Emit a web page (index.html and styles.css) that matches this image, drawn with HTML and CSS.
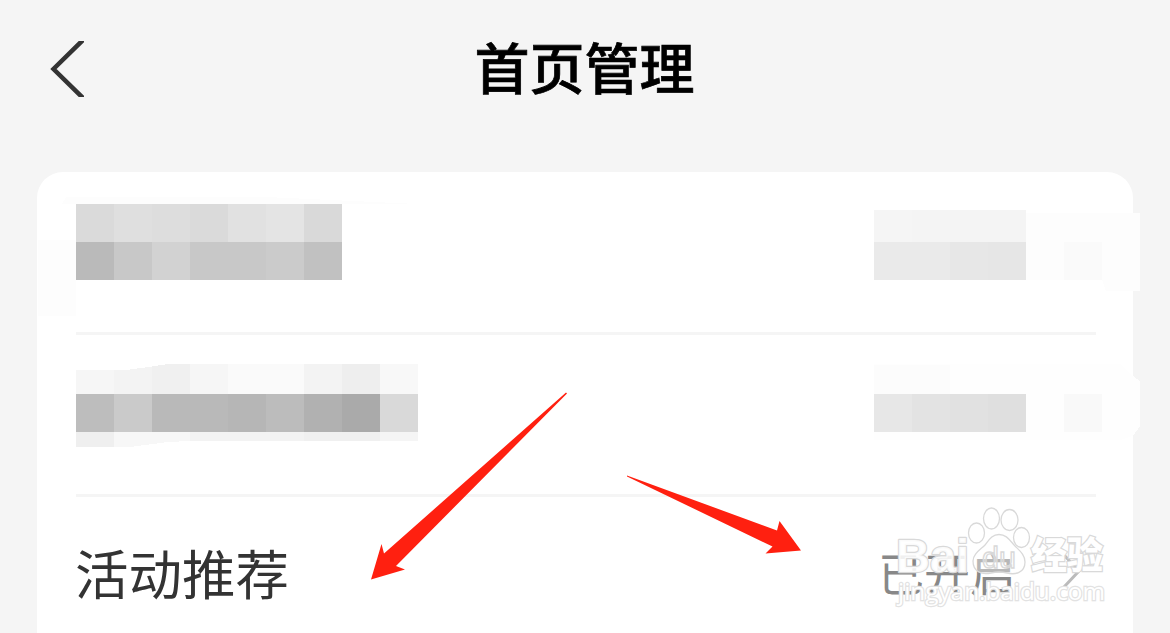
FILE: index.html
```
<!DOCTYPE html>
<html lang="zh-CN">

<head>
    <meta charset="UTF-8">
    <meta name="viewport" content="width=device-width, initial-scale=1.0">
    <title>首页管理</title>
    <link rel="stylesheet" href="styles.css">
</head>

<body>
    <header class="navbar">
        <svg class="back" width="40" height="56" viewBox="0 0 40 56">
            <path d="M42 -4 L9.5 28 L42 60" />
        </svg>
        <h1>首页管理</h1>
    </header>

    <main class="card">
        <div class="row row-first">
            <svg class="mosaic" width="342" height="76" viewBox="0 0 342 76">
                <path fill="#fdfdfd" d="M-38 36 H0 V112 H-38 Z M-10 -7 H190 L342 0 H-14 Z" />
                <rect fill="#dadada" x="0" y="0" width="38" height="38" />
                <rect fill="#dfdfdf" x="38" y="0" width="38" height="38" />
                <rect fill="#dddddd" x="76" y="0" width="38" height="38" />
                <rect fill="#dadada" x="114" y="0" width="38" height="38" />
                <rect fill="#e1e1e1" x="152" y="0" width="38" height="38" />
                <rect fill="#e4e4e4" x="190" y="0" width="38" height="38" />
                <rect fill="#d9d9d9" x="228" y="0" width="38" height="38" />
                <rect fill="#bababa" x="0" y="38" width="38" height="38" />
                <rect fill="#c8c8c8" x="38" y="38" width="38" height="38" />
                <rect fill="#d2d2d2" x="76" y="38" width="38" height="38" />
                <rect fill="#c8c8c8" x="114" y="38" width="76" height="38" />
                <rect fill="#cbcbcb" x="190" y="38" width="38" height="38" />
                <rect fill="#c1c1c1" x="228" y="38" width="38" height="38" />
            </svg>
            <svg class="mosaic" width="222" height="76" viewBox="0 0 222 76">
                <path fill="#fdfdfd" d="M152 9 H266 V87 H232 L228 76 H152 Z" />
                <rect fill="#f5f5f5" x="0" y="6" width="38" height="32" />
                <rect fill="#f4f4f4" x="38" y="6" width="114" height="32" />
                <rect fill="#eaeaea" x="0" y="38" width="76" height="38" />
                <rect fill="#e7e7e7" x="76" y="38" width="38" height="38" />
                <rect fill="#e6e6e6" x="114" y="38" width="38" height="38" />
                <rect fill="#fafafa" x="190" y="38" width="38" height="38" />
            </svg>
        </div>

        <div class="row row-second">
            <svg class="mosaic" width="342" height="83" viewBox="0 0 342 83">
                <path fill="#f6f6f6" d="M0 6 H38 V30 H0 Z" />
                <path fill="#f3f3f3" d="M38 6 L54 5.5 L76 2.5 V30 H38 Z" />
                <path fill="#f0f0f0" d="M76 2.5 L92 0 H114 V30 H76 Z" />
                <rect fill="#f6f6f6" x="114" y="0" width="38" height="30" />
                <rect fill="#fafafa" x="152" y="0" width="76" height="30" />
                <rect fill="#f3f3f3" x="228" y="0" width="38" height="30" />
                <rect fill="#eeeeee" x="266" y="0" width="38" height="30" />
                <rect fill="#f8f8f8" x="304" y="0" width="38" height="30" />
                <rect fill="#bdbdbd" x="0" y="30" width="38" height="38" />
                <rect fill="#cacaca" x="38" y="30" width="38" height="38" />
                <rect fill="#b9b9b9" x="76" y="30" width="76" height="38" />
                <rect fill="#b6b6b6" x="152" y="30" width="38" height="38" />
                <rect fill="#bcbcbc" x="190" y="30" width="38" height="38" />
                <rect fill="#b1b1b1" x="228" y="30" width="38" height="38" />
                <rect fill="#aaaaaa" x="266" y="30" width="38" height="38" />
                <rect fill="#d9d9d9" x="304" y="30" width="38" height="38" />
                <rect fill="#efefef" x="0" y="68" width="38" height="15" />
                <path fill="#f7f7f7" d="M38 68 H114 V77 L92 78 L54 83 H38 Z" />
                <rect fill="#f3f3f3" x="114" y="68" width="114" height="9" />
                <rect fill="#f0f0f0" x="228" y="68" width="76" height="9" />
                <rect fill="#f5f5f5" x="304" y="68" width="38" height="9" />
            </svg>
            <svg class="mosaic" width="222" height="83" viewBox="0 0 222 83">
                <path fill="#fefefe" d="M0 0 H246 L259 12 L266 17 V62 L259 72 L246 76 H0 Z" />
                <rect fill="#fcfcfc" x="0" y="1" width="76" height="29" />
                <rect fill="#e7e7e7" x="0" y="30" width="38" height="38" />
                <rect fill="#e3e3e3" x="38" y="30" width="38" height="38" />
                <rect fill="#e1e1e1" x="76" y="30" width="38" height="38" />
                <rect fill="#dfdfdf" x="114" y="30" width="38" height="38" />
                <rect fill="#f9f9f9" x="190" y="30" width="38" height="38" />
            </svg>
        </div>

        <div class="row row-third">
            <span class="label">活动推荐</span>
            <span class="value">
                已开启
                <svg class="chevron" width="20" height="40" viewBox="0 0 20 40">
                    <path d="M2 4 L17 20 L2 36" />
                </svg>
            </span>
        </div>
    </main>

    <!-- red pointers over the list -->
    <svg class="arrows" width="1170" height="633" viewBox="0 0 1170 633">
        <path d="M566 392.5 L567 393.5 L396 566 L405 569.5 L371 579.5 L381.5 544 L384 553.5 Z" />
        <path d="M627 475.5 L777 530.5 L779.5 521 L801 550.5 L765.5 553.5 L772.5 546.5 L627 476.5 Z" />
    </svg>

    <svg class="watermark" width="230" height="110" viewBox="890 500 230 110">
        <g class="mark">
            <text class="latin" x="896" y="572" textLength="73" lengthAdjust="spacingAndGlyphs">Bai</text>
            <ellipse cx="976.5" cy="533" rx="8" ry="10" />
            <ellipse cx="991.5" cy="518.5" rx="8" ry="10.5" />
            <ellipse cx="1009.5" cy="520" rx="8.5" ry="10.5" />
            <ellipse cx="1021.5" cy="537.5" rx="8" ry="10" />
            <path d="M999 534.5 C1007 534.5 1010 541 1015 546 C1020 551 1025 555 1025 562 C1025 573 1015 575 1007 573 C1001 571.5 997 571.5 991 573 C982 575 973 572 973 561 C973 554 980 550 985 545 C989 540 992 534.5 999 534.5 Z" />
            <text class="du" x="982" y="568" textLength="34" lengthAdjust="spacingAndGlyphs">du</text>
            <text class="cjk" x="1031" y="569" textLength="72" lengthAdjust="spacingAndGlyphs">经验</text>
            <text class="url" x="898" y="600" textLength="207" lengthAdjust="spacingAndGlyphs">jingyan.baidu.com</text>
        </g>
    </svg>
</body>

</html>
```

FILE: styles.css
```
* {
    box-sizing: border-box;
}

body {
    position: relative;
    height: 633px;
    margin: 0;
    overflow: hidden;
    background: #f5f5f5;
    font-family: 'Noto Sans CJK SC', 'Noto Sans', sans-serif;
}

.navbar {
    display: grid;
    grid-template-columns: 150px 1fr 150px;
    align-items: center;
    height: 138px;
    padding: 0 0 0 44px;
}

.back path {
    fill: none;
    stroke: #333;
    stroke-width: 4.5;
}

h1 {
    margin: 0;
    padding: 0 45px 9px 0;
    color: #000;
    font-size: 55px;
    font-weight: 500;
    line-height: 80px;
    text-align: center;
    -webkit-text-stroke: 0.7px #000;
}

.card {
    width: 1096px;
    height: 461px;
    margin: 34px 0 0 37px;
    padding: 0 37px 0 39px;
    border-radius: 26px 26px 0 0;
    background: #fff;
}

.row {
    display: flex;
    justify-content: space-between;
    align-items: flex-start;
    border-bottom: 3px solid #f5f5f5;
}

.row-first {
    height: 163px;
    padding-top: 32px;
}

.row-second {
    height: 162px;
    padding-top: 29px;
}

.row-third {
    height: 136px;
    padding-top: 35px;
    border-bottom: none;
}

.mosaic {
    overflow: visible;
    shape-rendering: crispEdges;
}

.label {
    margin-left: -1px;
    color: #333;
    font-size: 53.5px;
    line-height: 80px;
}

.value {
    display: flex;
    align-items: center;
    gap: 46px;
    padding: 4px 14px 0 0;
    color: #888;
    font-size: 46px;
    line-height: 70px;
}

.chevron path {
    fill: none;
    stroke: #bbb;
    stroke-width: 3;
}

.arrows {
    position: absolute;
    top: 0;
    left: 0;
    fill: #ff2010;
}

.watermark {
    position: absolute;
    top: 500px;
    left: 890px;
}

.mark {
    fill: rgba(255, 255, 255, 0.4);
    stroke: #d9d9d9;
    stroke-width: 1.3;
}

.latin {
    font: bold 47px 'Liberation Sans', sans-serif;
    fill: rgba(255, 255, 255, 0.9);
    stroke-width: 2.4;
    stroke-linejoin: round;
    paint-order: stroke;
}

.du {
    font: 29px 'Liberation Sans', sans-serif;
}

.cjk {
    font: 900 37px 'Noto Sans CJK SC', sans-serif;
    fill: #fff;
    stroke-width: 2.4;
    paint-order: stroke;
}

.url {
    font: 24px 'Open Sans', sans-serif;
    fill: #fff;
    stroke: #e2e2e2;
    stroke-width: 2.4;
    paint-order: stroke;
}
```
